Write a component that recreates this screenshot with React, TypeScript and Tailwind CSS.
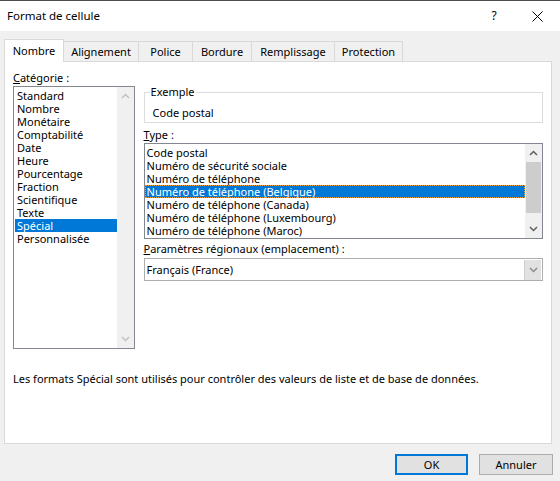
import { ReactNode } from 'react'

const categories = [
  'Standard',
  'Nombre',
  'Monétaire',
  'Comptabilité',
  'Date',
  'Heure',
  'Pourcentage',
  'Fraction',
  'Scientifique',
  'Texte',
  'Spécial',
  'Personnalisée',
]

const types = [
  'Code postal',
  'Numéro de sécurité sociale',
  'Numéro de téléphone',
  'Numéro de téléphone (Belgique)',
  'Numéro de téléphone (Canada)',
  'Numéro de téléphone (Luxembourg)',
  'Numéro de téléphone (Maroc)',
]

const tabs = [
  { name: 'Nombre', w: 'w-[60px]' },
  { name: 'Alignement', w: 'w-[75px]' },
  { name: 'Police', w: 'w-[54px]' },
  { name: 'Bordure', w: 'w-[59px]' },
  { name: 'Remplissage', w: 'w-[83px]' },
  { name: 'Protection', w: 'w-[68px]' },
]

function Chevron({ up, color }: { up?: boolean; color: string }) {
  return (
    <svg width="9" height="6" viewBox="0 0 9 6">
      <path
        d={up ? 'M1 5 L4.5 1.5 L8 5' : 'M1 1 L4.5 4.5 L8 1'}
        fill="none"
        stroke={color}
        strokeWidth="1.5"
      />
    </svg>
  )
}

function Label({ accel, rest }: { accel: string; rest: string }) {
  return (
    <div className="h-[16px] leading-[16px]">
      <u>{accel}</u>
      {rest}
    </div>
  )
}

function ListItem({ children, selected, focus }: { children: ReactNode; selected?: boolean; focus?: boolean }) {
  return (
    <div
      className={
        selected
          ? 'h-[13px] leading-[13px] pl-[2px] bg-[#0078d7] text-white' +
            (focus ? ' outline-1 outline-dotted outline-[#f0a030] -outline-offset-1' : '')
          : 'h-[13px] leading-[13px] pl-[2px]'
      }
    >
      {children}
    </div>
  )
}

export default function App() {
  return (
    <div
      className="w-[560px] h-[481px] bg-[#f0f0f0] text-[11px] text-black flex flex-col overflow-hidden"
      style={{ fontFamily: '"Noto Sans", "Open Sans", sans-serif' }}
    >
      {/* title bar */}
      <div className="h-[31px] bg-white border-t border-[#4f4f4f] flex items-center pl-[7px] pr-[17px]">
        <span className="flex-1 text-[11.5px]">Format de cellule</span>
        <span className="w-[20px] text-center mr-[28px] text-[12px]">?</span>
        <svg width="11" height="11" viewBox="0 0 11 11">
          <path d="M0.5 0.5 L10.5 10.5 M10.5 0.5 L0.5 10.5" stroke="#000" strokeWidth="1" />
        </svg>
      </div>

      {/* tabs */}
      <div className="flex items-end pl-[4px] mt-[7px] h-[23px]">
        {tabs.map((t, i) =>
          i === 0 ? (
            <div
              key={t.name}
              className={`${t.w} h-[23px] text-center bg-white border border-b-0 border-[#d9d9d9] leading-[21px] relative z-10 -mb-px`}
            >
              {t.name}
            </div>
          ) : (
            <div
              key={t.name}
              className={`${t.w} h-[20px] text-center border border-l-0 border-b-0 border-[#d9d9d9] leading-[19px]`}
            >
              {t.name}
            </div>
          ),
        )}
      </div>

      {/* panel */}
      <div className="ml-[4px] w-[548px] h-[383px] bg-white border border-[#d9d9d9] pt-[8px] px-[8px] flex flex-col">
        <div className="flex gap-[9px]">
          {/* left column */}
          <div className="w-[122px] flex flex-col">
            <Label accel="C" rest="atégorie :" />
            <div className="h-[263px] border border-[#828790] flex">
              <div className="flex-1 pt-[2px] pl-px">
                {categories.map((c) => (
                  <ListItem key={c} selected={c === 'Spécial'}>
                    {c}
                  </ListItem>
                ))}
              </div>
              <div className="w-[17px] bg-[#f0f0f0] flex flex-col justify-between items-center py-[6px]">
                <Chevron up color="#c2c2c2" />
                <Chevron color="#c2c2c2" />
              </div>
            </div>
          </div>

          {/* right column */}
          <div className="w-[401px] flex flex-col pt-[14px]">
            <fieldset className="w-[399px] h-[39px] border border-[#dcdcdc] pl-[8px] mb-[4px]">
              <legend className="px-px -ml-[3px] leading-[16px]">Exemple</legend>
              <div className="leading-[16px] mt-[5px]">Code postal</div>
            </fieldset>
            <Label accel="T" rest="ype :" />
            <div className="h-[96px] border border-[#828790] flex">
              <div className="flex-1 pt-[2px]">
                {types.map((t) => (
                  <ListItem key={t} selected={t.includes('Belgique')} focus>
                    {t}
                  </ListItem>
                ))}
              </div>
              <div className="w-[17px] bg-[#f0f0f0] flex flex-col items-center">
                <div className="h-[18px] flex items-center justify-center">
                  <Chevron up color="#606060" />
                </div>
                <div className="w-[15px] h-[51px] bg-[#cdcdcd]" />
                <div className="flex-1" />
                <div className="h-[18px] flex items-center justify-center">
                  <Chevron color="#606060" />
                </div>
              </div>
            </div>
            <div className="mt-[2px]">
              <Label accel="P" rest="aramètres régionaux (emplacement) :" />
            </div>
            <div className="mt-px h-[23px] border border-[#adadad] flex items-center">
              <div className="flex-1 pl-[2px] leading-[16px]">Français (France)</div>
              <div className="w-[17px] h-[20px] mr-px bg-[#e1e1e1] border-l border-[#cfcfcf] flex items-center justify-center">
                <Chevron color="#8a8a8a" />
              </div>
            </div>
          </div>
        </div>

        <div className="mt-[22px] leading-[16px]">
          Les formats Spécial sont utilisés pour contrôler des valeurs de liste et de base de données.
        </div>
      </div>

      {/* buttons */}
      <div className="flex justify-end gap-[11px] pr-[7px] mt-[10px]">
        <button className="w-[73px] h-[21px] bg-[#e1e1e1] border-2 border-[#0078d7] leading-[16px]">OK</button>
        <button className="w-[74px] h-[21px] bg-[#e1e1e1] border border-[#adadad] leading-[16px]">Annuler</button>
      </div>
    </div>
  )
}
